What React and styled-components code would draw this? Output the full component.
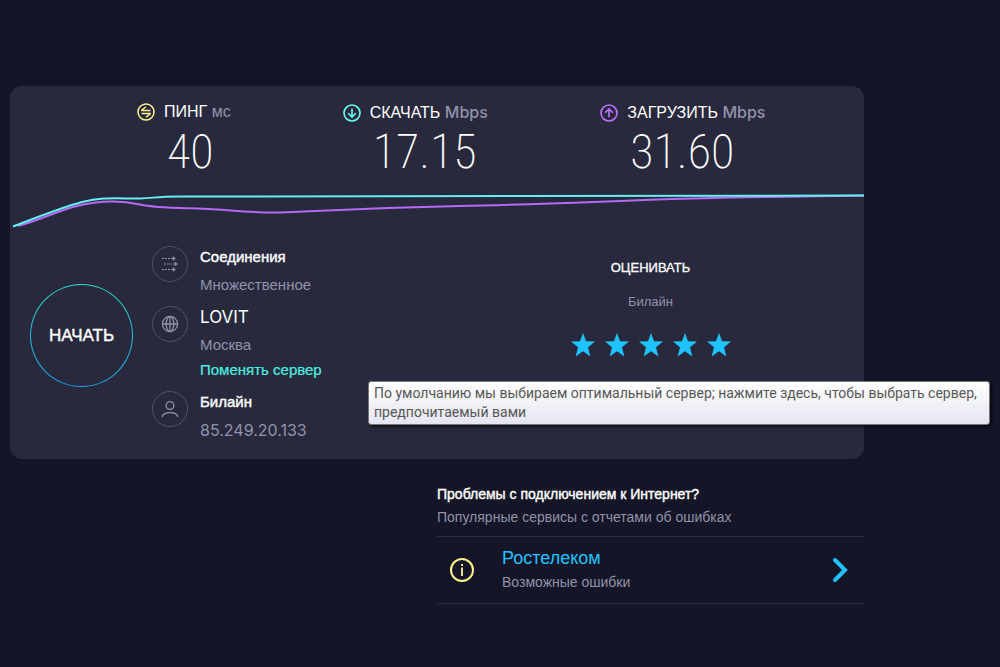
import React from "react";
import styled, { createGlobalStyle } from "styled-components";

const GlobalStyle = createGlobalStyle`
  *, *::before, *::after { box-sizing: border-box; }
  body {
    margin: 0;
    background: #141526;
    color: #fff;
    font-family: "Liberation Sans", Arial, sans-serif;
  }
  h2, p, dl, dd, dt, ul { margin: 0; padding: 0; font-weight: 400; }
  button { border: 0; padding: 0; background: none; color: inherit; font: inherit; cursor: pointer; }
`;

const Page = styled.main`
  min-height: 100vh;
  padding: 86px 136px 24px 10px;
`;

const Card = styled.section`
  padding: 16px 0 18px;
  border-radius: 12px;
  background: #28293d;
`;

const Metrics = styled.dl`
  display: grid;
  grid-template-columns: 206fr 258fr 264fr;
  padding-left: 127px;
`;

const Metric = styled.div`
  display: grid;
  grid-template-columns: 18px auto;
  justify-content: start;
  column-gap: 9px;
  align-items: center;
`;

const MetricLabel = styled.dt`
  font-size: 16px;
  line-height: 20px;
  white-space: nowrap;
`;

const Unit = styled.span`
  color: #9193a8;
  font-family: ${(p) => (p.$latin ? "Inter, sans-serif" : "inherit")};
  font-weight: ${(p) => (p.$latin ? 500 : 400)};
`;

const MetricValue = styled.dd`
  grid-column: 2;
  padding: 2px 0 0 3px;
  font-family: "Roboto Condensed", "Liberation Sans Narrow", Roboto, sans-serif;
  font-size: 48px;
  font-weight: 200;
  line-height: 54px;
`;

const Chart = styled.svg`
  display: block;
  width: 100%;
  height: 44px;
  margin-top: 9px;
`;

const Body = styled.div`
  display: grid;
  grid-template-columns: 102px 1fr 427px;
  column-gap: 20px;
  padding: 14px 0 0 20px;
`;

const StartButton = styled.button`
  align-self: start;
  width: 103px;
  height: 103px;
  margin-top: 38px;
  border: 1px solid transparent;
  border-radius: 50%;
  background:
    linear-gradient(#28293d, #28293d) padding-box,
    linear-gradient(#2bdcc4, #1f9fe8) border-box;
  font-size: 17px;
  -webkit-text-stroke: 0.4px #fff;
`;

const Details = styled.ul`
  display: grid;
  row-gap: 10px;
  align-content: start;
  list-style: none;
`;

const Detail = styled.li`
  display: grid;
  grid-template-columns: 36px 1fr;
  column-gap: 12px;
`;

const RoundIcon = styled.span`
  display: grid;
  place-items: center;
  width: 36px;
  height: 36px;
  border: 1px solid #51526a;
  border-radius: 50%;
`;

const DetailTitle = styled.p`
  font-family: ${(p) => (p.$latin ? "Inter, sans-serif" : "inherit")};
  font-size: ${(p) => (p.$latin ? "17px" : "15px")};
  line-height: 22px;
  -webkit-text-stroke: ${(p) => (p.$latin ? "0" : "0.4px #fff")};
`;

const DetailText = styled.p`
  margin-top: 6px;
  color: #9193a8;
  font-family: ${(p) => (p.$latin ? "Inter, sans-serif" : "inherit")};
  font-size: ${(p) => (p.$latin ? "16px" : "15px")};
  line-height: 22px;
`;

const ServerChange = styled.div`
  position: relative;
  margin-top: 3px;
  font-size: 15px;
  line-height: 22px;
`;

const ServerLink = styled.a`
  color: #4df0e0;
  text-decoration: none;
  -webkit-text-stroke: 0.2px #4df0e0;
`;

const Tooltip = styled.div`
  position: absolute;
  top: 22px;
  left: 168px;
  z-index: 1;
  width: 622px;
  padding: 2px 5px;
  border: 1px solid #767676;
  border-radius: 3px;
  background: linear-gradient(#fff, #e4e5f0);
  box-shadow: 2px 2px 3px rgba(0, 0, 0, 0.6);
  color: #575757;
  font-family: Roboto, "Noto Sans", sans-serif;
  font-size: 14px;
  line-height: 19px;
`;

const Rating = styled.div`
  display: flex;
  flex-direction: column;
  align-items: center;
  padding-top: 12px;
  font-size: 13px;
  line-height: 20px;
`;

const RatingTitle = styled.p`
  -webkit-text-stroke: 0.3px #fff;
`;

const RatingProvider = styled.p`
  margin-top: 14px;
  color: #9193a8;
`;

const Stars = styled.div`
  display: flex;
  gap: 10px;
  margin-top: 21px;
`;

const StarButton = styled.button`
  width: 24px;
  height: 24px;
  svg { display: block; }
`;

const Issues = styled.section`
  width: 50%;
  margin: 24px 0 0 auto;
`;

const IssuesTitle = styled.h2`
  font-size: 14px;
  line-height: 22px;
  -webkit-text-stroke: 0.4px #fff;
`;

const Muted = styled.p`
  color: #9193a8;
  font-size: 14px;
  line-height: 24px;
`;

const IssueRow = styled.div`
  display: grid;
  grid-template-columns: 24px 1fr 16px;
  align-items: center;
  column-gap: 28px;
  height: 68px;
  margin-top: 7px;
  padding: 0 16px 0 13px;
  border-top: 1px solid #2b2c40;
  border-bottom: 1px solid #2b2c40;
`;

const IssueLink = styled.a`
  display: block;
  color: #1fc3ff;
  font-size: 18px;
  line-height: 24px;
  text-decoration: none;
`;

const ChevronButton = styled.button`
  width: 16px;
  height: 26px;
  svg { display: block; }
`;

const PingIcon = () => (
  <svg width="18" height="18" viewBox="0 0 18 18" fill="none" stroke="#fff38e" strokeWidth="1.5" aria-hidden="true">
    <circle cx="9" cy="9" r="8" />
    <path d="M4.2 7.5H13.4M4.5 7.4L9 3.8M13.8 10.5H4.6M13.5 10.6L9 14.2" strokeWidth="1.4" />
  </svg>
);

const ArrowIcon = ({ color, up }) => (
  <svg width="18" height="18" viewBox="0 0 18 18" fill="none" stroke={color} strokeWidth="1.6" aria-hidden="true">
    <circle cx="9" cy="9" r="8" />
    <path d={up ? "M9 13.2V5.2M5.2 8.8L9 5L12.8 8.8" : "M9 4.8V12.8M5.2 9.2L9 13L12.8 9.2"} />
  </svg>
);

const ConnectionsIcon = () => (
  <svg width="18" height="18" viewBox="0 0 18 18" fill="none" stroke="#9193a8" aria-hidden="true">
    <path d="M1 3.5H13M3 9H15M1 14.5H13" strokeDasharray="2 1" />
    <path
      d="M12 1.5L14.5 3.5L12 5.5ZM14 7L16.5 9L14 11ZM12 12.5L14.5 14.5L12 16.5Z"
      fill="#9193a8"
      strokeWidth="0.5"
    />
  </svg>
);

const GlobeIcon = () => (
  <svg width="18" height="18" viewBox="0 0 18 18" fill="none" stroke="#9193a8" strokeWidth="1.3" aria-hidden="true">
    <circle cx="9" cy="9" r="7.6" />
    <ellipse cx="9" cy="9" rx="3.8" ry="7.6" />
    <path d="M9 1.4V16.6M1.4 9H16.6" />
  </svg>
);

const PersonIcon = () => (
  <svg width="18" height="18" viewBox="0 0 18 18" fill="none" stroke="#9193a8" strokeWidth="1.3" aria-hidden="true">
    <circle cx="9" cy="5.5" r="3.9" />
    <path d="M1.2 17C1.6 14.2 4.2 12.6 9 12.6S16.4 14.2 16.8 17" />
  </svg>
);

const StarIcon = () => (
  <svg width="24" height="24" viewBox="0 0 24 24" fill="#1fc3ff" aria-hidden="true">
    <path d="M12 0L15 8.3L24 8.6L17 14.2L19.3 23.4L12 18.2L4.7 23.4L7 14.2L0 8.6L9 8.3Z" />
  </svg>
);

const InfoIcon = () => (
  <svg width="24" height="24" viewBox="0 0 24 24" fill="none" stroke="#fff38e" strokeWidth="2" aria-hidden="true">
    <circle cx="12" cy="12" r="11" />
    <path d="M12 9.5V18M12 6V8" strokeWidth="1.8" />
  </svg>
);

const metrics = [
  { label: "ПИНГ", unit: "мс", value: "40", icon: <PingIcon /> },
  { label: "СКАЧАТЬ", unit: "Mbps", value: "17.15", icon: <ArrowIcon color="#6afff3" /> },
  { label: "ЗАГРУЗИТЬ", unit: "Mbps", value: "31.60", icon: <ArrowIcon color="#bf71ff" up /> },
];

export default function App() {
  return (
    <>
      <GlobalStyle />
      <Page>
        <Card>
          <Metrics>
            {metrics.map((m) => (
              <Metric key={m.label}>
                {m.icon}
                <MetricLabel>
                  {m.label} <Unit $latin={m.unit === "Mbps"}>{m.unit}</Unit>
                </MetricLabel>
                <MetricValue>{m.value}</MetricValue>
              </Metric>
            ))}
          </Metrics>

          <Chart viewBox="0 0 854 44" preserveAspectRatio="none" fill="none" strokeWidth="2" aria-hidden="true">
            <path
              stroke="#b56af5"
              d="M8 38C30 32 45 24 65 18.5C90 12 110 12 130 16.5C150 21 175 19.5 215 22C240 24 250 25 270 24.5C310 23 350 20 450 18C560 16 650 10 760 9L854 7.5"
            />
            <path
              stroke="#63f0ee"
              d="M3 38.5C28 29 50 20 72 14C92 9 105 10.5 130 10.5C145 10 145 8.5 170 8.5C300 7 500 7 854 7.5"
            />
          </Chart>

          <Body>
            <StartButton type="button">НАЧАТЬ</StartButton>
            <Details>
              <Detail>
                <RoundIcon><ConnectionsIcon /></RoundIcon>
                <div>
                  <DetailTitle>Соединения</DetailTitle>
                  <DetailText>Множественное</DetailText>
                </div>
              </Detail>
              <Detail>
                <RoundIcon><GlobeIcon /></RoundIcon>
                <div>
                  <DetailTitle $latin>LOVIT</DetailTitle>
                  <DetailText>Москва</DetailText>
                  <ServerChange>
                    <ServerLink href="#servers" aria-describedby="server-tip">Поменять сервер</ServerLink>
                    <Tooltip id="server-tip" role="tooltip">
                      По умолчанию мы выбираем оптимальный сервер; нажмите здесь, чтобы выбрать сервер,
                      предпочитаемый вами
                    </Tooltip>
                  </ServerChange>
                </div>
              </Detail>
              <Detail>
                <RoundIcon><PersonIcon /></RoundIcon>
                <div>
                  <DetailTitle>Билайн</DetailTitle>
                  <DetailText $latin>85.249.20.133</DetailText>
                </div>
              </Detail>
            </Details>
            <Rating>
              <RatingTitle>ОЦЕНИВАТЬ</RatingTitle>
              <RatingProvider>Билайн</RatingProvider>
              <Stars>
                {[1, 2, 3, 4, 5].map((n) => (
                  <StarButton key={n} type="button" aria-label={`Оценка ${n}`}>
                    <StarIcon />
                  </StarButton>
                ))}
              </Stars>
            </Rating>
          </Body>
        </Card>

        <Issues>
          <IssuesTitle>Проблемы с подключением к Интернет?</IssuesTitle>
          <Muted>Популярные сервисы с отчетами об ошибках</Muted>
          <IssueRow>
            <InfoIcon />
            <div>
              <IssueLink href="#rostelecom">Ростелеком</IssueLink>
              <Muted>Возможные ошибки</Muted>
            </div>
            <ChevronButton type="button" aria-label="Открыть Ростелеком">
              <svg width="16" height="26" viewBox="0 0 16 26" fill="none" stroke="#1fc3ff" strokeWidth="4" strokeLinecap="round" aria-hidden="true">
                <path d="M3 3L13 13L3 23" />
              </svg>
            </ChevronButton>
          </IssueRow>
        </Issues>
      </Page>
    </>
  );
}
